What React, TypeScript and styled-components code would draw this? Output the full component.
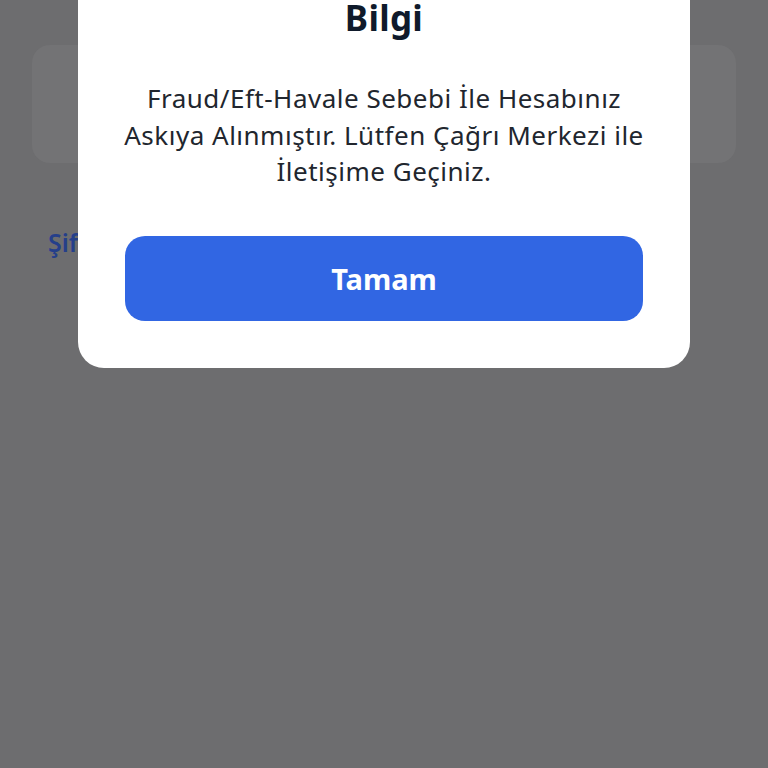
import React from 'react'
import styled, { createGlobalStyle } from 'styled-components'

const GlobalStyle = createGlobalStyle`
  html, body {
    margin: 0;
    padding: 0;
    background: #6d6d6f;
    font-family: "Noto Sans", "Open Sans", sans-serif;
  }
`

const Page = styled.div`
  position: relative;
  width: 768px;
  height: 768px;
  overflow: hidden;
  background: #6d6d6f;
  padding: 45px 32px 0;
  box-sizing: border-box;
`

const FormCard = styled.div`
  height: 118px;
  border-radius: 18px;
  background: #737375;
`

const ForgotLink = styled.div`
  margin: 62px 0 0 16px;
  font-size: 25px;
  font-weight: 600;
  color: #253f8a;
`

const Dialog = styled.div`
  position: absolute;
  left: 78px;
  top: -34px;
  width: 612px;
  box-sizing: border-box;
  padding: 32px 47px 47px;
  background: #ffffff;
  border-radius: 26px;
  display: flex;
  flex-direction: column;
  align-items: center;
`

const Title = styled.h2`
  margin: 0;
  font-size: 35px;
  line-height: 40px;
  font-weight: 700;
  color: #0f1a2b;
  letter-spacing: 0.3px;
`

const Message = styled.p`
  margin: 42px 0 0;
  font-size: 26px;
  line-height: 36.5px;
  font-weight: 400;
  color: #21262e;
  text-align: center;
  letter-spacing: 0.5px;
  white-space: nowrap;
`

const OkButton = styled.button`
  margin-top: 46px;
  width: 100%;
  height: 85px;
  border: none;
  border-radius: 20px;
  background: #3166e3;
  color: #ffffff;
  font-family: inherit;
  font-size: 29px;
  font-weight: 700;
  cursor: pointer;
`

export default function App() {
  return (
    <>
      <GlobalStyle />
      <Page>
        <FormCard />
        <ForgotLink>Şifremi Unuttum</ForgotLink>
        <Dialog>
          <Title>Bilgi</Title>
          <Message>
            Fraud/Eft-Havale Sebebi İle Hesabınız
            <br />
            Askıya Alınmıştır. Lütfen Çağrı Merkezi ile
            <br />
            İletişime Geçiniz.
          </Message>
          <OkButton>Tamam</OkButton>
        </Dialog>
      </Page>
    </>
  )
}
